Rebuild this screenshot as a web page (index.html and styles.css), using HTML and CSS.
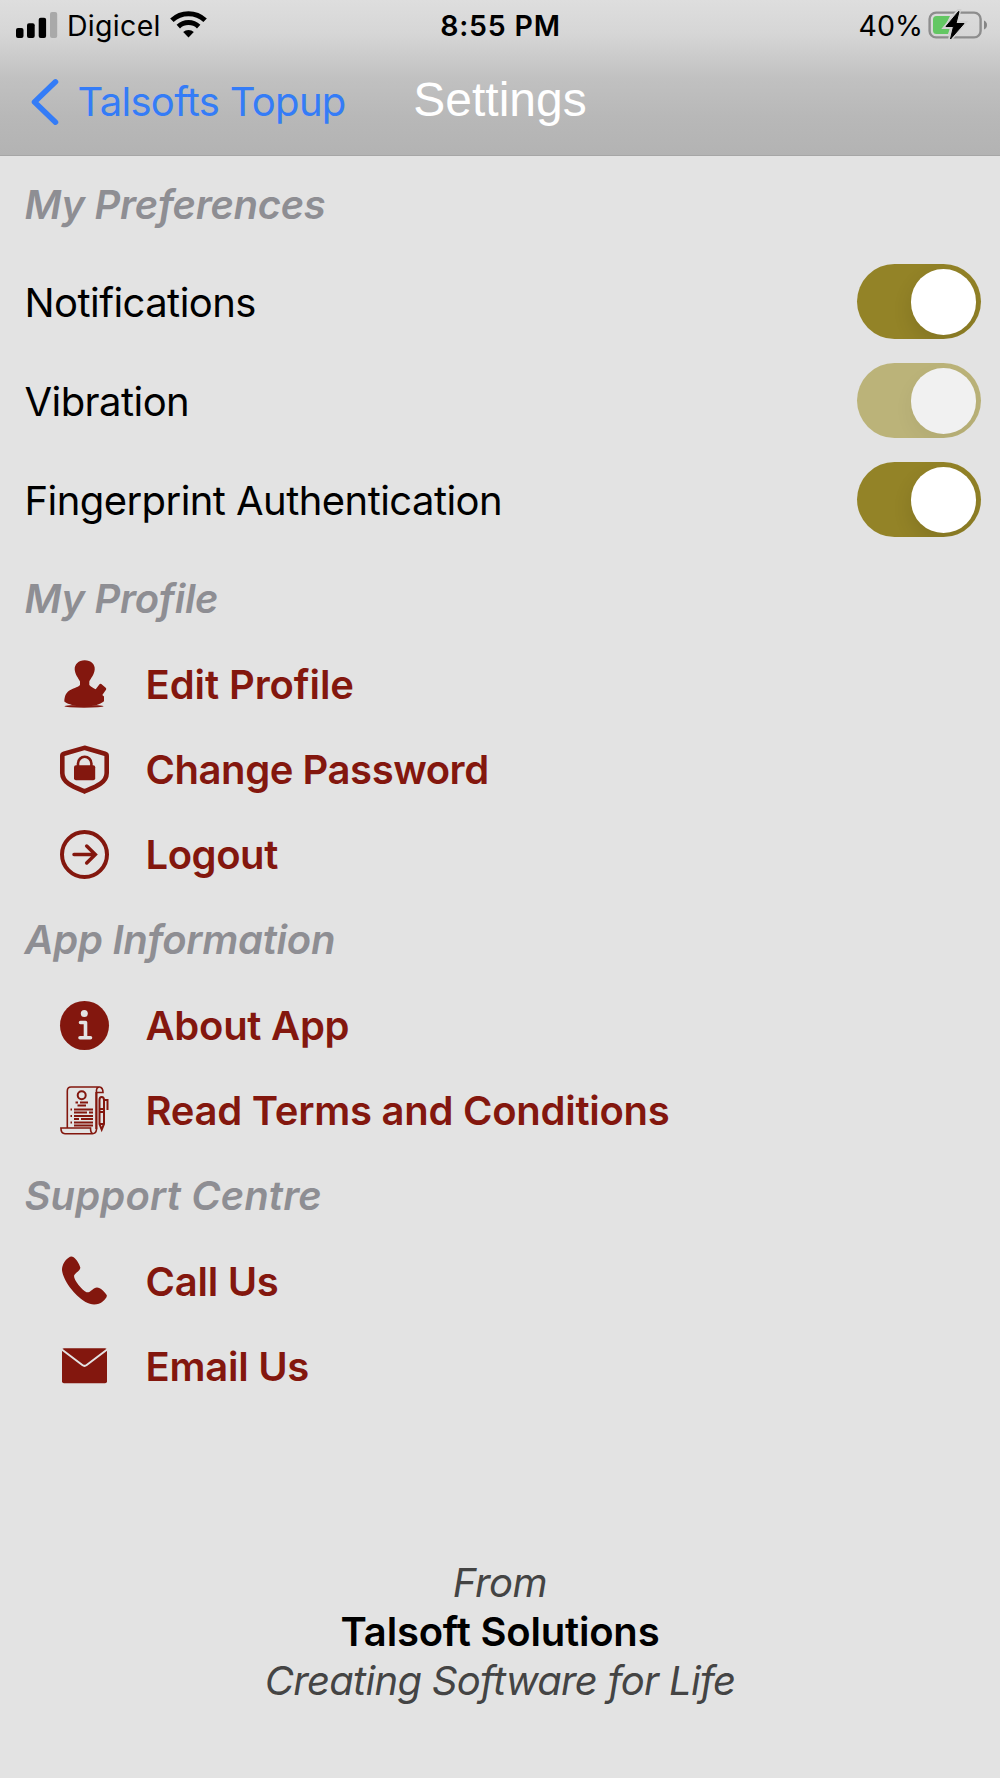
FILE: index.html
```
<!DOCTYPE html>
<html lang="en">
<head>
<meta charset="utf-8">
<title>Settings</title>
<link rel="stylesheet" href="styles.css">
</head>
<body>
<header class="header">
  <div class="status">
    <div class="status-left">
      <svg class="signal" width="42" height="27" viewBox="0 0 42 27"><rect x="0" y="17" width="7.5" height="10" rx="2"/><rect x="11" y="12.3" width="7.7" height="14.7" rx="2"/><rect x="22.7" y="6.7" width="7.4" height="20.3" rx="2"/><rect x="34" y="1" width="7.2" height="26" rx="2" fill="#a9a9a9"/></svg>
      <span class="carrier">Digicel</span>
      <svg class="wifi" width="37" height="28" viewBox="0 0 37 28"><g fill="none" stroke="#000" stroke-width="5"><path d="M1.9 10.3a24 24 0 0 1 33.2 0"/><path d="M8.3 16.600a15 15 0 0 1 20.400 0"/></g><path d="M18.500 27.500l-5.300-5.500a7.800 7.800 0 0 1 10.600 0z"/></svg>
    </div>
    <div class="time">8:55 PM</div>
    <div class="status-right">
      <span class="percent">40%</span>
      <svg width="60" height="30" viewBox="0 0 60 30"><rect x="1.6" y="2.6" width="51" height="24.800" rx="6.500" fill="none" stroke="#8d8d8d" stroke-width="2.400"/><path d="M8.500 6H22L16 18h6l-2 6H8.500Q5 24 5 20.500V9.500Q5 6 8.500 6z" fill="#63c763"/><path d="M56 10.500q3 1.500 3 4.500t-3 4.500z" fill="#858585"/><path d="M30.500 1L17.500 17h7.500l-3 12.500L36 13h-8l3-12z" stroke="#d0d0d0" stroke-width="4"/><path d="M30.500 1.500L18 16.500h7.500l-3 12.500L36 13.500h-8l3-12z" stroke="#000" stroke-linejoin="round"/></svg>
    </div>
  </div>
  <nav class="nav">
    <a class="back"><svg width="28" height="46" viewBox="0 0 28 46"><path d="M24.500 2.800L3.500 23l21 20.200" fill="none" stroke="#347cf7" stroke-width="5.500" stroke-linecap="round" stroke-linejoin="round"/></svg><span>Talsofts Topup</span></a>
    <h1 class="title">Settings</h1>
  </nav>
</header>
<main>
  <h2 class="heading">My Preferences</h2>
  <div class="prefs">
    <div class="pref"><span class="pref-name">Notifications</span><span class="toggle"><i class="knob"></i></span></div>
    <div class="pref"><span class="pref-name">Vibration</span><span class="toggle disabled"><i class="knob"></i></span></div>
    <div class="pref"><span class="pref-name">Fingerprint Authentication</span><span class="toggle"><i class="knob"></i></span></div>
  </div>
  <h2 class="heading">My Profile</h2>
  <div class="item"><svg class="icon" viewBox="0 0 49 49"><path d="M24.700 .3C31 .3 35.200 4.500 34.700 9.500C34.200 15 30.500 18.500 29.300 21.500V25C31.500 27.500 33.500 28 35.700 29.300L39.500 24.200Q40.300 23.300 41.300 24L45.700 27.700Q46.700 28.700 46 29.700L42.300 35L44 36.500V41.300C41.500 43.500 39.500 44 36.700 45H12C9.500 44 6.500 43.500 4.300 41.500C4.500 36.500 5.500 33.500 9 30.700C12.500 28.300 17.500 27.700 20 25V21.500C18.500 18.300 15 14.500 14.700 9.500C14.500 4.500 18.500 .3 24.700 .3z"/><ellipse cx="24" cy="46.300" rx="19.500" ry="1.500"/></svg><span class="wide">Edit Profile</span></div>
  <div class="item"><svg class="icon" viewBox="0 0 49 49"><path class="line" stroke-width="4.600" d="M24.500 2.800L45 8.800Q46.700 9.300 46.700 11V28C46.700 38 35 42 24.500 46.400C14 42 2.300 38 2.300 28V11Q2.300 9.300 4 8.800z"/><rect x="14" y="20.300" width="21.200" height="14.900" rx="2"/><path class="line" stroke-width="2.600" d="M18 21V18.500a6.700 6.700 0 0 1 13.400 0V21"/></svg><span class="tight">Change Password</span></div>
  <div class="item"><svg class="icon" viewBox="0 0 49 49"><circle class="line" cx="24.500" cy="24.500" r="22.500" stroke-width="4"/><path class="line" stroke-width="3.500" stroke-linecap="round" d="M14 24.500H35M26.700 16L35.300 24.500L26.700 33"/></svg><span class="tight">Logout</span></div>
  <h2 class="heading">App Information</h2>
  <div class="item"><svg class="icon" viewBox="0 0 49 49"><circle cx="24.500" cy="24.500" r="24.500"/><circle class="light" cx="24.300" cy="12.500" r="3.500"/><path fill="none" stroke="#e3e3e3" stroke-width="3.600" stroke-linecap="round" stroke-linejoin="round" d="M20.500 21.500H25.500V36.800M20 36.800H30.500"/></svg><span>About App</span></div>
  <div class="item"><svg class="icon" viewBox="0 0 49 49"><g class="line" stroke-width="1.600"><path d="M7.300 41.500V5Q7.300 1 11 1H39.500Q43 1.500 43 6.500H36.500V43.500Q36 47.700 32.500 47.700H5Q1 47.700 .9 42H30.500Q30.500 47 33 47.700M39 1Q36 1.500 36.500 6.500"/><path stroke-width="2" d="M36.300 6V43"/><circle cx="21.700" cy="9.200" r="4" stroke-width="2"/><path stroke-width="1.900" d="M15.500 16.500h2.500M20 16.500h8M17.500 19.500h8.500M10.500 23.500h1.500M14 23.500h19M14 26.500h13M29 26.500h4M10.500 30h1.500M14 30h19M14 33h5M21 33h12M10.500 36.500h1.500M14 36.500h19M14 39.500h19"/><path stroke-width="2" d="M39.500 14Q39.500 11 41.700 11T44 14V38L41.700 43.500L39.500 38zM39.500 23H44M39.500 26H44M39.500 38H44M44 14H47.500V24"/></g></svg><span>Read Terms and Conditions</span></div>
  <h2 class="heading loose">Support Centre</h2>
  <div class="item"><svg class="icon" viewBox="0 0 49 49"><path d="M12.500 -.2C15.500 1 19 6 20.300 10.500C20.600 13.500 15 16 14 18.700C14 23.500 21.500 32.500 26.500 35.200C30.500 36 33 30.500 37 30.400C40.500 30.700 44.500 34.500 46.700 38C47.500 40 45 42.500 43 44.200C38.500 48 32 48.700 25.500 45C14 38 3 23 2 13C2 8 5 2.500 10 -.2Q11.500 -.8 12.500 -.2z"/></svg><span>Call Us</span></div>
  <div class="item"><svg class="icon" viewBox="0 0 49 49"><rect x="2" y="6.200" width="45" height="35.100" rx="2"/><path fill="none" stroke="#e3e3e3" stroke-width="2" d="M1.500 7.300L22.300 23Q24.500 24.800 26.700 23L47.500 7.300"/></svg><span>Email Us</span></div>
</main>
<footer class="footer">
  <p class="from">From</p>
  <p class="company">Talsoft Solutions</p>
  <p class="motto">Creating Software for Life</p>
</footer>
</body>
</html>
```
FILE: styles.css
```
* { box-sizing: border-box; }
body {
  margin: 0;
  min-height: 1778px;
  background: #e3e3e3;
  color: #000;
  font-family: Inter, "Liberation Sans", sans-serif;
  font-size: 40px;
  line-height: 49px;
  white-space: nowrap;
}
h1, h2, p { margin: 0; }
svg { display: block; flex: none; overflow: visible; }

.header {
  height: 156px;
  background: linear-gradient(#dedede 0, #d6d6d6 22%, #c1c1c1 50%, #b8b8b8 75%, #b3b3b3 100%);
  border-bottom: 1px solid #a6a6a6;
}
.status {
  display: grid;
  grid-template-columns: 1fr auto 1fr;
  align-items: center;
  height: 50px;
  padding: 0 12px 0 16px;
  font-size: 28.5px;
}
.status-left, .status-right { display: flex; align-items: center; }
.status-right { justify-content: flex-end; gap: 5px; }
.carrier { margin-left: 9px; letter-spacing: .3px; }
.wifi { margin-top: -3px; margin-left: 9px; }
.signal { margin-top: -2px; }
.time { margin-right: 3px; font-weight: 600; letter-spacing: .8px; }

.nav {
  display: grid;
  grid-template-columns: 1fr auto 1fr;
  align-items: center;
  height: 103px;
}
.back {
  display: flex;
  align-items: center;
  gap: 19px;
  padding-left: 30.5px;
  color: #347cf7;
  letter-spacing: -.7px;
}
.title {
  margin-top: -4px;
  color: #fff;
  font-family: "Liberation Sans", Arial, sans-serif;
  font-size: 48px;
  font-weight: 400;
}

main { padding-top: 5.5px; }
.heading {
  display: flex;
  align-items: center;
  height: 85.33px;
  padding-left: 24.5px;
  color: #8e8e93;
  font-size: 40px;
  font-style: italic;
  font-weight: 600;
  letter-spacing: -.28px;
}
.prefs { padding: 5.5px 0 6.7px; }
.pref {
  display: flex;
  align-items: center;
  justify-content: space-between;
  height: 99px;
  padding: 0 19px 0 24.5px;
  letter-spacing: -.56px;
}
.pref-name { padding-top: 1.5px; }
.toggle {
  display: flex;
  align-items: center;
  justify-content: flex-end;
  width: 124px;
  height: 75px;
  padding-right: 5px;
  border-radius: 38px;
  background: #938327;
  overflow: hidden;
}
.knob {
  width: 65.5px;
  height: 65.5px;
  border-radius: 50%;
  background: #fff;
  box-shadow: 0 8px 20px rgba(0, 0, 0, .11);
}
.disabled { background: #bbb379; }
.disabled .knob { background: #f1f1f1; box-shadow: 0 8px 20px rgba(0, 0, 0, .05); }

.item {
  display: flex;
  align-items: center;
  gap: 36.5px;
  height: 85.33px;
  padding-left: 60px;
  color: #83170e;
  font-weight: 600;
  letter-spacing: -.26px;
}
.icon { width: 49px; height: 49px; fill: currentColor; }
.line { fill: none; stroke: currentColor; }
.light { fill: #e3e3e3; }
.tight { letter-spacing: -.44px; }
.wide { letter-spacing: -.08px; }
.loose { letter-spacing: .12px; }

.footer {
  margin-top: 149px;
  color: #444;
  text-align: center;
}
.from, .motto { font-style: italic; letter-spacing: -.7px; }
.from { letter-spacing: -.4px; }
.company { color: #000; font-weight: 600; letter-spacing: -.2px; }
```
